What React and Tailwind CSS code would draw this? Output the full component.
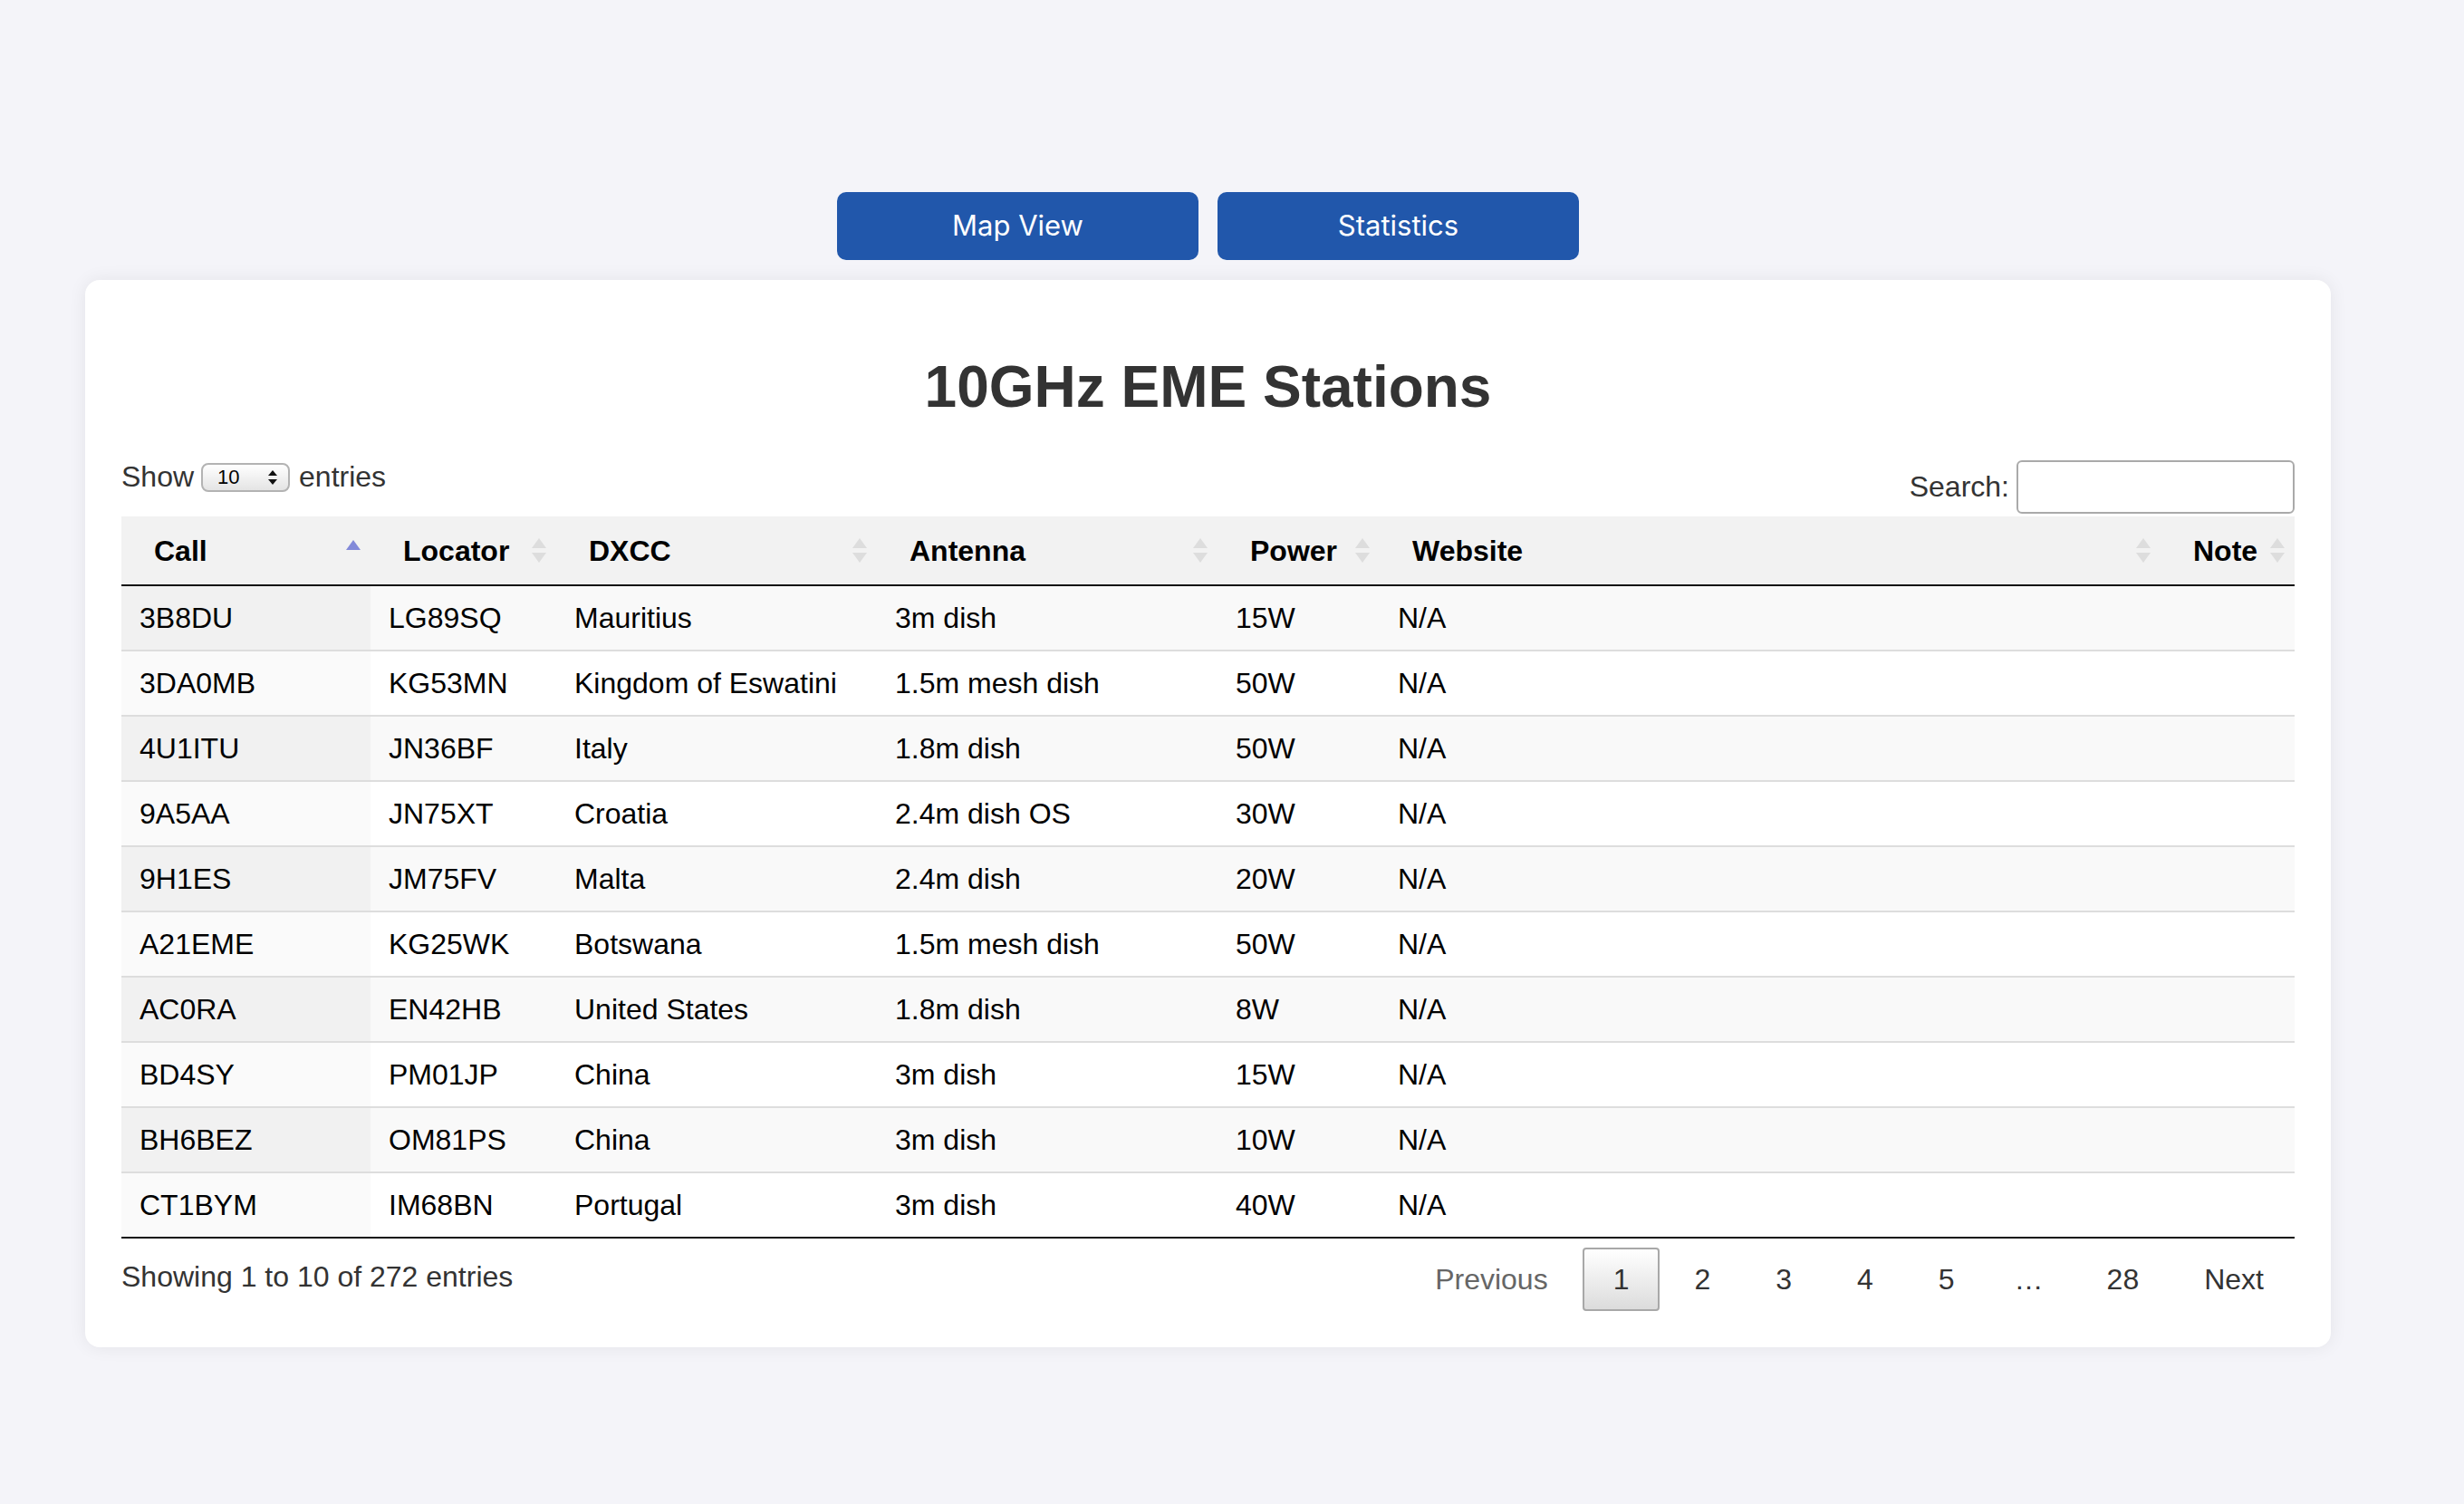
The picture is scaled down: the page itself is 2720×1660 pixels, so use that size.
import React from 'react';

const rows = [
    ['3B8DU', 'LG89SQ', 'Mauritius', '3m dish', '15W', 'N/A'],
    ['3DA0MB', 'KG53MN', 'Kingdom of Eswatini', '1.5m mesh dish', '50W', 'N/A'],
    ['4U1ITU', 'JN36BF', 'Italy', '1.8m dish', '50W', 'N/A'],
    ['9A5AA', 'JN75XT', 'Croatia', '2.4m dish OS', '30W', 'N/A'],
    ['9H1ES', 'JM75FV', 'Malta', '2.4m dish', '20W', 'N/A'],
    ['A21EME', 'KG25WK', 'Botswana', '1.5m mesh dish', '50W', 'N/A'],
    ['AC0RA', 'EN42HB', 'United States', '1.8m dish', '8W', 'N/A'],
    ['BD4SY', 'PM01JP', 'China', '3m dish', '15W', 'N/A'],
    ['BH6BEZ', 'OM81PS', 'China', '3m dish', '10W', 'N/A'],
    ['CT1BYM', 'IM68BN', 'Portugal', '3m dish', '40W', 'N/A'],
];

const headers = ['Call', 'Locator', 'DXCC', 'Antenna', 'Power', 'Website', 'Note'];

const gridCols = 'grid grid-cols-[275px_205px_354px_376px_179px_862px_148px]';

const SortIcon = ({ asc }) => (
    <svg width="16" height="30" viewBox="0 0 16 30" className="absolute right-[11px] top-1/2 -translate-y-1/2">
        {asc ? (
            <polygon points="8,3 16,14 0,14" fill="#8289d9" />
        ) : (
            <>
                <polygon points="8,1 16,12 0,12" fill="#dddddd" />
                <polygon points="0,17 16,17 8,28" fill="#dddddd" />
            </>
        )}
    </svg>
);

const PageButton = ({ children, current, disabled }) => (
    <span
        className={`ml-[4px] h-[70px] min-w-[48px] px-[32px] flex items-center justify-center rounded-[4px] border-2 ${current
            ? 'border-[#a8a8a8] bg-gradient-to-b from-white to-[#dcdcdc] text-[#333]'
            : 'border-transparent'} ${disabled ? 'text-[#666]' : 'text-[#333]'}`}>
        {children}
    </span>
);

const App = () => {
    return (
        <div className="min-h-[1660px] bg-[#f4f4f9] font-['Liberation_Sans',Arial,sans-serif] pt-[212px]">
            <div className="w-[2479px] ml-[94px]">
                {/* Top buttons */}
                <div className="flex justify-center gap-[21px]">
                    <button className="w-[399px] h-[75px] rounded-[10px] bg-[#2157ab] text-white text-[31px] font-['Inter',sans-serif]">
                        Map View
                    </button>
                    <button className="w-[399px] h-[75px] rounded-[10px] bg-[#2157ab] text-white text-[31px] font-['Inter',sans-serif]">
                        Statistics
                    </button>
                </div>

                {/* Card */}
                <div className="mt-[22px] bg-white rounded-[16px] shadow-[0_0_20px_rgba(0,0,0,0.07)] px-[40px] pt-[40px] pb-[40px]">
                    <h1 className="mt-[41px] text-center text-[64px] leading-[74px] font-bold text-[#333]">10GHz EME Stations</h1>

                    {/* Controls */}
                    <div className="mt-[41px] h-[62px] flex justify-between items-start text-[32px] text-[#333]">
                        <div className="flex items-center mt-[3px] leading-[37px]">
                            <span>Show</span>
                            <div className="ml-[8px] mr-[10px] w-[98px] h-[32px] border-2 border-[#b3b3b3] rounded-[8px] bg-gradient-to-b from-white to-[#e4e4e4] flex items-center justify-between pl-[16px] pr-[12px]">
                                <span className="text-[22px] leading-none text-black">10</span>
                                <svg width="10" height="18" viewBox="0 0 10 18">
                                    <polygon points="5,1 10,7 0,7" fill="#111" />
                                    <polygon points="0,11 10,11 5,17" fill="#111" />
                                </svg>
                            </div>
                            <span>entries</span>
                        </div>
                        <div className="flex items-center h-[62px] pt-[2px]">
                            <span>Search:</span>
                            <input className="ml-[8px] w-[307px] h-[59px] border-2 border-[#aaa] rounded-[6px] bg-white outline-none" />
                        </div>
                    </div>

                    {/* Table */}
                    <div className="mt-[3px] text-[32px] text-black">
                        <div className={`${gridCols} h-[77px] bg-[#f2f2f2] border-b-2 border-[#111]`}>
                            {headers.map((h, i) => (
                                <div key={h} className="relative flex items-center pl-[36px] font-bold">
                                    {h}
                                    <SortIcon asc={i === 0} />
                                </div>
                            ))}
                        </div>
                        <div className="border-b-2 border-[#111]">
                            {rows.map((r, i) => {
                                const odd = i % 2 === 0;
                                return (
                                    <div key={r[0]}
                                        className={`${gridCols} ${i === 0 ? 'h-[70px]' : 'h-[72px] border-t-2 border-[#dddddd]'} ${odd ? 'bg-[#f9f9f9]' : 'bg-white'}`}>
                                        <div className={`flex items-center px-[20px] ${odd ? 'bg-[#f1f1f1]' : 'bg-[#fafafa]'}`}>{r[0]}</div>
                                        {r.slice(1).map((c, j) => (
                                            <div key={j} className="flex items-center px-[20px] whitespace-nowrap">{c}</div>
                                        ))}
                                        <div></div>
                                    </div>
                                );
                            })}
                        </div>
                    </div>

                    {/* Footer */}
                    <div className="flex justify-between items-start text-[32px] text-[#333]">
                        <div className="pt-[24px] leading-[37px]">Showing 1 to 10 of 272 entries</div>
                        <div className="pt-[10px] flex items-center">
                            <PageButton disabled>Previous</PageButton>
                            <PageButton current>1</PageButton>
                            <PageButton>2</PageButton>
                            <PageButton>3</PageButton>
                            <PageButton>4</PageButton>
                            <PageButton>5</PageButton>
                            <span className="px-[32px] h-[70px] flex items-center">…</span>
                            <PageButton>28</PageButton>
                            <PageButton>Next</PageButton>
                        </div>
                    </div>
                </div>
            </div>
        </div>
    );
};

export default App;
